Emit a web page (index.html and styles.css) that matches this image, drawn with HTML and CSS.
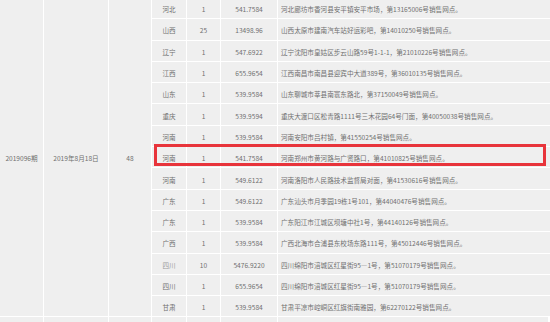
FILE: index.html
```html
<!DOCTYPE html>
<html lang="zh-CN">
<head>
<meta charset="utf-8">
<title>开奖详情</title>
<link rel="stylesheet" href="styles.css">
</head>
<body>
<div class="wrap">
  <div class="tbl">
    <div class="cell merged c1">2019096期</div>
    <div class="cell merged c2">2019年8月18日</div>
    <div class="cell merged c3">48</div>

    <div class="cell">河北</div><div class="cell">1</div><div class="cell">541.7584</div><div class="cell addr">河北廊坊市香河县安平镇安平市场，第13165006号销售网点。</div>
    <div class="cell">山西</div><div class="cell">25</div><div class="cell">13498.96</div><div class="cell addr">山西太原市建南汽车站好运彩吧，第14010250号销售网点。</div>
    <div class="cell">辽宁</div><div class="cell">1</div><div class="cell">547.6922</div><div class="cell addr">辽宁沈阳市皇姑区步云山路59号1-1-1，第21010226号销售网点。</div>
    <div class="cell">江西</div><div class="cell">1</div><div class="cell">655.9654</div><div class="cell addr">江西南昌市南昌县迎宾中大道389号，第36010135号销售网点。</div>
    <div class="cell">山东</div><div class="cell">1</div><div class="cell">539.9584</div><div class="cell addr">山东聊城市莘县南寰东路北，第37150049号销售网点。</div>
    <div class="cell">重庆</div><div class="cell">1</div><div class="cell">539.9594</div><div class="cell addr">重庆大渡口区松青路1111号三木花园64号门面，第40050038号销售网点。</div>
    <div class="cell">河南</div><div class="cell">1</div><div class="cell">539.9584</div><div class="cell addr">河南安阳市吕村镇，第41550254号销售网点。</div>
    <div class="cell">河南</div><div class="cell">1</div><div class="cell">541.7584</div><div class="cell addr">河南郑州市黄河路与广贤路口，第41010825号销售网点。</div>
    <div class="cell">河南</div><div class="cell">1</div><div class="cell">549.6122</div><div class="cell addr">河南洛阳市人民路技术监督局对面，第41530616号销售网点。</div>
    <div class="cell">广东</div><div class="cell">1</div><div class="cell">549.6122</div><div class="cell addr">广东汕头市月季园19栋1号101，第44040476号销售网点。</div>
    <div class="cell">广东</div><div class="cell">1</div><div class="cell">539.9584</div><div class="cell addr">广东阳江市江城区坝塘中社1号，第44140126号销售网点。</div>
    <div class="cell">广西</div><div class="cell">1</div><div class="cell">539.9584</div><div class="cell addr">广西北海市合浦县东校场东路111号，第45012446号销售网点。</div>
    <div class="cell"><span class="light">四川</span></div><div class="cell">10</div><div class="cell">5476.9220</div><div class="cell addr">四川绵阳市涪城区红星街95—1号，第51070179号销售网点。</div>
    <div class="cell">四川</div><div class="cell">1</div><div class="cell">655.9654</div><div class="cell addr">四川绵阳市涪城区红星街95—1号，第51070179号销售网点。</div>
    <div class="cell">甘肃</div><div class="cell">1</div><div class="cell">539.9584</div><div class="cell addr">甘肃平凉市崆峒区红旗街南雅园，第62270122号销售网点。</div>

    <div class="cell"></div><div class="cell"></div><div class="cell"></div><div class="cell"></div><div class="cell"></div><div class="cell"></div><div class="cell"></div>
  </div>
  <div class="mark"></div>
</div>
</body>
</html>
```
FILE: styles.css
```css
html, body {
  margin: 0;
  padding: 0;
  background: #ffffff;
}

body {
  width: 550px;
  height: 322px;
  overflow: hidden;
  font-family: "Noto Sans CJK SC", "Microsoft YaHei", sans-serif;
  font-size: 6.6px;
  color: #6f6f6f;
}

.wrap {
  position: relative;
  width: 550px;
  height: 322px;
  overflow: hidden;
}

.tbl {
  display: grid;
  grid-template-columns: 43px 64px 42px 34px 33px 56px 270px 10px;
  grid-template-rows: repeat(15, 20.3px) 20px;
  gap: 1px;
  margin-top: -2px;
  background: #ffffff;
}

.cell {
  background: #efefef;
  display: flex;
  align-items: center;
  justify-content: center;
  padding-top: 2px;
  box-sizing: border-box;
  white-space: nowrap;
  overflow: hidden;
}

.addr {
  justify-content: flex-start;
  padding-left: 3px;
  grid-column: 7 / 9;
}

.merged {
  grid-row: 1 / 16;
}

.c1 { grid-column: 1; }
.c2 { grid-column: 2; }
.c3 { grid-column: 3; }

.light {
  color: #9a9a9a;
}

.mark {
  position: absolute;
  left: 154px;
  top: 144px;
  width: 392px;
  height: 22px;
  box-sizing: border-box;
  border: 3px solid #e8343b;
}
```
